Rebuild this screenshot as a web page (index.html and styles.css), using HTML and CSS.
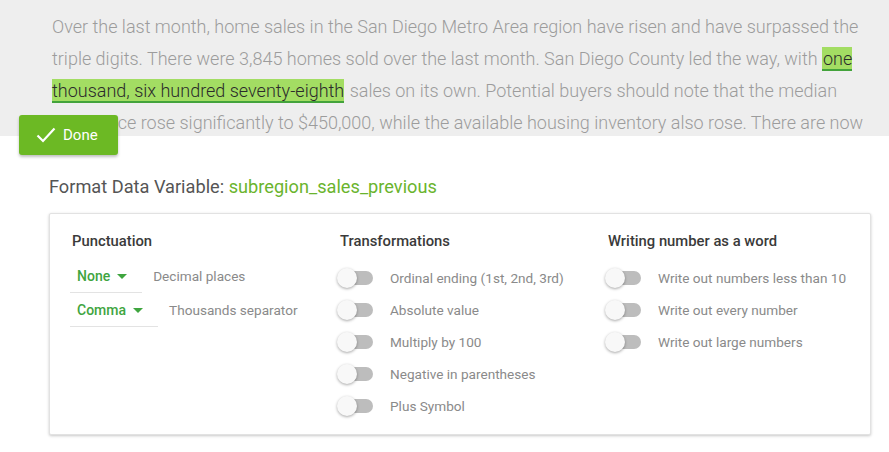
FILE: index.html
```html
<!DOCTYPE html>
<html>
<head>
<meta charset="utf-8">
<link rel="stylesheet" href="styles.css">
</head>
<body>
<div class="page">
  <div class="preview">
    <p class="story">Over the last month, home sales in the San Diego Metro Area region have risen and have surpassed the triple digits. There were 3,845 homes sold over the last month. San Diego County led the way, with <span class="hl">one thousand, six hundred seventy-eighth</span> sales on its own. Potential buyers should note that the median sales price rose significantly to $450,000, while the available housing inventory also rose. There are now more homes available than last month.</p>
    <button class="done">
      <svg class="check" width="20" height="16" viewBox="0 0 20 16"><path d="M1.5 8.5 L7 14 L18.5 1.5" fill="none" stroke="#fff" stroke-width="2.2"/></svg>
      <span>Done</span>
    </button>
  </div>
  <div class="editor">
    <h2 class="title">Format Data Variable: <span class="var">subregion_sales_previous</span></h2>
    <div class="card">
      <div class="col">
        <h3 class="head">Punctuation</h3>
        <div class="plist">
          <div class="prow">
            <div class="select"><span>None</span><i class="caret"></i></div>
            <span class="label">Decimal places</span>
          </div>
          <div class="prow">
            <div class="select"><span>Comma</span><i class="caret"></i></div>
            <span class="label">Thousands separator</span>
          </div>
        </div>
      </div>
      <div class="col">
        <h3 class="head">Transformations</h3>
        <div class="trow"><span class="toggle"><i></i></span><span class="label">Ordinal ending (1st, 2nd, 3rd)</span></div>
        <div class="trow"><span class="toggle"><i></i></span><span class="label">Absolute value</span></div>
        <div class="trow"><span class="toggle"><i></i></span><span class="label">Multiply by 100</span></div>
        <div class="trow"><span class="toggle"><i></i></span><span class="label">Negative in parentheses</span></div>
        <div class="trow"><span class="toggle"><i></i></span><span class="label">Plus Symbol</span></div>
      </div>
      <div class="col">
        <h3 class="head">Writing number as a word</h3>
        <div class="trow"><span class="toggle"><i></i></span><span class="label">Write out numbers less than 10</span></div>
        <div class="trow"><span class="toggle"><i></i></span><span class="label">Write out every number</span></div>
        <div class="trow"><span class="toggle"><i></i></span><span class="label">Write out large numbers</span></div>
      </div>
    </div>
  </div>
</div>
</body>
</html>
```
FILE: styles.css
```css
* { box-sizing: border-box; }
html, body { margin: 0; padding: 0; background: #fff; }
body { font-family: Roboto, "Liberation Sans", sans-serif; width: 889px; height: 452px; overflow: hidden; }
.page { position: relative; }
.preview {
  position: relative;
  background: #eeeeee;
  height: 136px;
}
.story {
  margin: 0;
  height: 136px;
  overflow: hidden;
  padding: 11px 0 0 52px;
  width: 866px;
  font-size: 18px;
  font-weight: 300;
  line-height: 32px;
  color: #9c9c9c;
}
.hl {
  background: #a3dd63;
  color: #2b2b2b;
  border-bottom: 2px solid #43a33b;
  padding: 1px 0 0 1px;
  margin-right: 1px;
}
.done {
  position: absolute;
  left: 19px;
  top: 115px;
  width: 99px;
  height: 40px;
  border: 0;
  border-radius: 3px;
  background: #6cb924;
  color: #fff;
  font-family: Roboto, "Liberation Sans", sans-serif;
  font-size: 15px;
  font-weight: 400;
  display: flex;
  align-items: center;
  gap: 7px;
  padding: 0 0 0 17px;
  box-shadow: 0 2px 3px rgba(0,0,0,0.25);
}
.check { display: block; }
.editor { padding: 40px 18px 0 49px; }
.title {
  margin: 0;
  font-size: 18.2px;
  font-weight: 400;
  line-height: 22px;
  color: #555;
}
.var { color: #6ab42d; }
.card {
  margin-top: 15px;
  height: 222px;
  background: #fff;
  border: 1px solid #e2e2e2;
  border-radius: 2px;
  box-shadow: 0 1px 3px rgba(0,0,0,0.22);
  display: grid;
  grid-template-columns: 268px 268px 1fr;
  padding: 18px 0 0 22px;
}
.head {
  margin: 0 0 12px;
  font-size: 14.8px;
  font-weight: 500;
  line-height: 18px;
  color: #3a3a3a;
}
.plist { margin-top: -3px; }
.prow {
  display: flex;
  align-items: center;
  gap: 11px;
  height: 34px;
}
.select {
  height: 34px;
  display: flex;
  align-items: center;
  gap: 7px;
  padding: 0 15px 0 7px;
  margin-left: -2px;
  border-bottom: 1px solid #e3e3e3;
  color: #3fa53f;
  font-size: 14px;
  font-weight: 500;
}
.caret {
  display: block;
  width: 0; height: 0;
  border-left: 5px solid transparent;
  border-right: 5px solid transparent;
  border-top: 5px solid #3fa53f;
  margin-top: 2px;
}
.label {
  font-size: 13.6px;
  color: #8a8a8a;
}
.trow {
  display: flex;
  align-items: center;
  height: 32px;
  gap: 17px;
}
.toggle {
  position: relative;
  display: block;
  width: 36px;
  height: 20px;
  margin-left: -3px;
}
.toggle::before {
  content: "";
  position: absolute;
  left: 4px; right: 0; top: 3px;
  height: 14px;
  border-radius: 7px;
  background: #bdbdbd;
}
.toggle i {
  position: absolute;
  left: 0; top: 0;
  width: 20px; height: 20px;
  border-radius: 50%;
  background: #f8f8f8;
  box-shadow: 0 1px 3px rgba(0,0,0,0.35);
}
```
